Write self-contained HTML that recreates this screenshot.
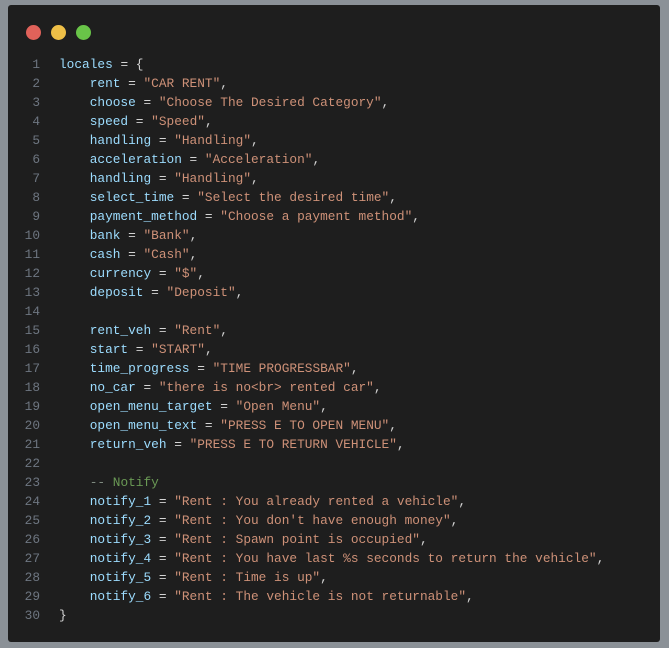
<!DOCTYPE html>
<html><head><meta charset="utf-8"><style>
html,body{margin:0;padding:0;width:669px;height:648px;background:#8b9197;overflow:hidden}
.panel{position:absolute;left:8px;top:5px;width:652px;height:637px;background:#1e1e1e;border-radius:3px}
.dot{position:absolute;top:20px;width:15px;height:15px;border-radius:50%}
pre{position:absolute;left:0;top:50px;margin:0;font-family:"Liberation Mono",monospace;font-size:12.8px;line-height:19px;color:#d4d4d4}
.ln{display:inline-block;width:32px;text-align:right;color:#6e7681;margin-right:19px}
.k{color:#9cdcfe}.s{color:#ce9178}.c{color:#6a9955}.d{color:#7f8a80}
</style></head><body>
<div class="panel">
<div class="dot" style="left:18px;background:#e0625a"></div>
<div class="dot" style="left:43px;background:#eebf47"></div>
<div class="dot" style="left:68px;background:#69c448"></div>
<pre><span class="ln">1</span><span class="k">locales</span> = {
<span class="ln">2</span>    <span class="k">rent</span> = <span class="s">"CAR RENT"</span>,
<span class="ln">3</span>    <span class="k">choose</span> = <span class="s">"Choose The Desired Category"</span>,
<span class="ln">4</span>    <span class="k">speed</span> = <span class="s">"Speed"</span>,
<span class="ln">5</span>    <span class="k">handling</span> = <span class="s">"Handling"</span>,
<span class="ln">6</span>    <span class="k">acceleration</span> = <span class="s">"Acceleration"</span>,
<span class="ln">7</span>    <span class="k">handling</span> = <span class="s">"Handling"</span>,
<span class="ln">8</span>    <span class="k">select_time</span> = <span class="s">"Select the desired time"</span>,
<span class="ln">9</span>    <span class="k">payment_method</span> = <span class="s">"Choose a payment method"</span>,
<span class="ln">10</span>    <span class="k">bank</span> = <span class="s">"Bank"</span>,
<span class="ln">11</span>    <span class="k">cash</span> = <span class="s">"Cash"</span>,
<span class="ln">12</span>    <span class="k">currency</span> = <span class="s">"$"</span>,
<span class="ln">13</span>    <span class="k">deposit</span> = <span class="s">"Deposit"</span>,
<span class="ln">14</span>
<span class="ln">15</span>    <span class="k">rent_veh</span> = <span class="s">"Rent"</span>,
<span class="ln">16</span>    <span class="k">start</span> = <span class="s">"START"</span>,
<span class="ln">17</span>    <span class="k">time_progress</span> = <span class="s">"TIME PROGRESSBAR"</span>,
<span class="ln">18</span>    <span class="k">no_car</span> = <span class="s">"there is no&lt;br&gt; rented car"</span>,
<span class="ln">19</span>    <span class="k">open_menu_target</span> = <span class="s">"Open Menu"</span>,
<span class="ln">20</span>    <span class="k">open_menu_text</span> = <span class="s">"PRESS E TO OPEN MENU"</span>,
<span class="ln">21</span>    <span class="k">return_veh</span> = <span class="s">"PRESS E TO RETURN VEHICLE"</span>,
<span class="ln">22</span>
<span class="ln">23</span>    <span class="d">--</span> <span class="c">Notify</span>
<span class="ln">24</span>    <span class="k">notify_1</span> = <span class="s">"Rent : You already rented a vehicle"</span>,
<span class="ln">25</span>    <span class="k">notify_2</span> = <span class="s">"Rent : You don't have enough money"</span>,
<span class="ln">26</span>    <span class="k">notify_3</span> = <span class="s">"Rent : Spawn point is occupied"</span>,
<span class="ln">27</span>    <span class="k">notify_4</span> = <span class="s">"Rent : You have last %s seconds to return the vehicle"</span>,
<span class="ln">28</span>    <span class="k">notify_5</span> = <span class="s">"Rent : Time is up"</span>,
<span class="ln">29</span>    <span class="k">notify_6</span> = <span class="s">"Rent : The vehicle is not returnable"</span>,
<span class="ln">30</span>}</pre>
</div>
</body></html>
